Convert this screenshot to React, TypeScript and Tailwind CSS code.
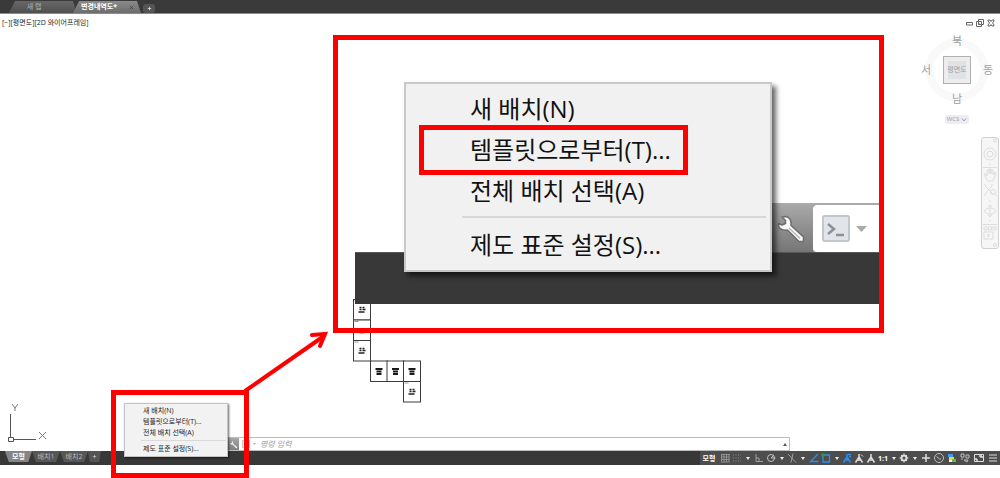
import React from "react";

type MenuItem = { label: string; separated?: boolean };

const MENU: MenuItem[] = [
  { label: "새 배치(N)" },
  { label: "템플릿으로부터(T)..." },
  { label: "전체 배치 선택(A)" },
  { label: "제도 표준 설정(S)...", separated: true },
];

function Wrench({ className }: { className: string }) {
  return (
    <svg viewBox="0 0 28 28" className={className} aria-hidden="true">
      <path
        d="M5 2 L9 1.500 Q14 3 14 8 L14 10.500 L26.500 22 L26.500 26.500 L22 26.500 L10.500 15 Q4 16 1.500 11 L1.500 8.500 L5 10 L8.500 8.500 L8.500 5.500 Z"
        fill="#fafafa"
        stroke="#6d6d6d"
        strokeWidth="1.500"
        strokeLinejoin="round"
      />
      <path d="M12 13 L23 23.500" stroke="#b4b4b4" strokeWidth="1.200" />
    </svg>
  );
}

function TitleTabs() {
  return (
    <header className="flex h-[14px] shrink-0 items-end border-b border-[#8c8c8c] bg-[#3a3a3a] pl-[9px] text-[7px] leading-[12px]">
      <button className="h-[12px] w-[68px] bg-linear-to-b from-[#686868] to-[#505050] pr-[18px] text-center text-[#b4b4b4] [clip-path:polygon(9%_0,94%_0,100%_100%,0_100%)]">
        새 탭
      </button>
      <div className="-ml-[4px] flex h-[12px] w-[68px] items-center justify-between bg-linear-to-b from-[#8a8a8a] to-[#6d6d6d] pr-[7px] pl-[8px] text-white [clip-path:polygon(9%_0,94%_0,100%_100%,0_100%)]">
        <button className="font-bold whitespace-nowrap">변경내역도*</button>
        <button aria-label="탭 닫기" className="text-[#444444]">
          <svg viewBox="0 0 6 6" className="size-[5px]">
            <path d="M1 1 L5 5 M5 1 L1 5" stroke="currentColor" />
          </svg>
        </button>
      </div>
      <button
        aria-label="새 도면"
        className="ml-[2px] flex h-[9px] w-[12px] items-center justify-center rounded-[3px] bg-[#555555] text-[#dddddd]"
      >
        <svg viewBox="0 0 6 6" className="size-[5px]">
          <path d="M3 1 V5 M1 3 H5" stroke="currentColor" />
        </svg>
      </button>
    </header>
  );
}

function WindowButtons() {
  return (
    <div className="absolute top-[5px] right-[5px] flex gap-[3px] text-[#666666]">
      <button aria-label="최소화">
        <svg viewBox="0 0 8 8" className="size-[8px]" fill="none" stroke="currentColor">
          <path d="M1.500 3.500 H7.500 V6 H1.500 Z" />
        </svg>
      </button>
      <button aria-label="이전 크기로">
        <svg viewBox="0 0 8 8" className="size-[8px]" fill="none" stroke="currentColor">
          <path d="M2.500 .5 H7.500 V5.500 H2.500 Z M.5 2.500 H5.500 V7.500 H.5 Z M2 5 H4" />
        </svg>
      </button>
      <button aria-label="닫기">
        <svg viewBox="0 0 8 8" className="size-[8px]" fill="none" stroke="currentColor">
          <path d="M1 1 H3 L4 2.500 L5 1 H7 V2 L5.500 4 L7 6 V7 H5 L4 5.500 L3 7 H1 V6 L2.500 4 L1 2 Z" />
        </svg>
      </button>
    </div>
  );
}

function ViewCube() {
  return (
    <div className="absolute top-[20px] right-[7px] flex w-[72px] flex-col items-center text-[#a0a0a0]">
      <svg viewBox="0 0 64 64" className="absolute top-[4px] left-[4px] size-[64px]" aria-hidden="true">
        <circle cx="32" cy="32" r="27.500" fill="none" stroke="#f9f9f9" strokeWidth="8" />
      </svg>
      <div className="relative flex w-full flex-col items-center text-[11px] leading-[14px]">
        <button>북</button>
        <div className="flex h-[44px] w-full items-center justify-between">
          <button>서</button>
          <button className="flex size-[28px] items-center justify-center border border-[#b0b0b0] bg-[#ededed] text-[7px]">
            <span className="flex h-[18px] w-[18px] items-center justify-center bg-[#e0e2e8] whitespace-nowrap">
              평면도
            </span>
          </button>
          <button>동</button>
        </div>
        <button>남</button>
      </div>
      <button className="mt-[9px] flex h-[9px] w-[24px] items-center justify-center gap-[2px] rounded-[2px] bg-[#ececf5] text-[6px] leading-[9px]">
        WCS
        <svg viewBox="0 0 6 4" className="h-[4px] w-[6px]" fill="none" stroke="currentColor">
          <path d="M1 .5 L3 3 L5 .5" />
        </svg>
      </button>
    </div>
  );
}

function NavigationBar() {
  return (
    <nav
      aria-label="탐색 막대"
      className="absolute top-[123px] right-px rounded-[3px] border border-[#d0d0d0] bg-[#f6f6f6]"
    >
      <svg viewBox="0 0 16 110" className="h-[110px] w-[16px]" fill="none" stroke="#dddddd">
        <circle cx="13" cy="2.500" r="1.500" />
        <circle cx="8" cy="16" r="6" />
        <circle cx="8" cy="16" r="3" />
        <path d="M7 26 H9 M1 29.500 H15" />
        <path d="M4 40 L2 36 L4 36 L5 38 V32 H7 V36 V31 H9 V36 V32 H11 V37 L13 34 L14 35 L11 43 H6 Z" />
        <path d="M3 48 L11 56 M10 48 L3 56 M2 47 H4 M9 47 H11 M2 57 H4" />
        <circle cx="11" cy="54" r="2.500" />
        <path d="M12.500 56 L15 58 M7 63 H9" />
        <path d="M8 67 V79 M6 69 L8 67 L10 69 M6 77 L8 79 L10 77 M2 73 C5 69 12 69 14 73 C12 77 5 77 2 73 M7 83 H9" />
        <path d="M1 86.500 H15 M2 89 H5 V92 H2 Z M6.500 89 H9.500 V92 H6.500 Z M11 89 H14 V92 H11 Z M2 94 H11 V101 H2 Z M6 96 L8 97.500 L6 99 Z" />
        <circle cx="13" cy="107" r="1.500" />
      </svg>
    </nav>
  );
}

const SHEETS = [
  { x: 0.5, y: 0.5, mark: 0 },
  { x: 0.5, y: 21, mark: 1 },
  { x: 0.5, y: 41.5, mark: 0 },
  { x: 17.5, y: 62, mark: 2 },
  { x: 34, y: 62, mark: 2 },
  { x: 50.5, y: 62, mark: 2 },
  { x: 50.5, y: 82.5, mark: 0 },
];

function SheetDrawing() {
  return (
    <svg viewBox="0 0 70 104" className="absolute top-[285px] left-[353px] h-[104px] w-[70px]" aria-hidden="true">
      {SHEETS.map((s, i) => (
        <g key={i}>
          <rect x={s.x} y={s.y} width="17" height="20.500" fill="#ffffff" stroke="#3c3c3c" />
          {s.mark === 2 ? (
            <path
              d={`M${s.x + 5} ${s.y + 8} h7 M${s.x + 6} ${s.y + 10.5} h5 M${s.x + 6} ${s.y + 13} h5`}
              stroke="#1a1a1a"
              strokeWidth="2"
            />
          ) : s.mark === 1 ? (
            <path d={`M${s.x + 6} ${s.y + 8.5} h5 M${s.x + 6} ${s.y + 13} h5`} stroke="#999999" />
          ) : (
            <path
              d={`M${s.x + 6} ${s.y + 8} h2 m1 0 h2 M${s.x + 6} ${s.y + 10} h2 m1 0 h3 M${s.x + 5} ${s.y + 12.5} h6`}
              stroke="#222222"
              strokeWidth="1.500"
            />
          )}
          {s.mark !== 2 && <path d={`M${s.x + 1} ${s.y + 1.5} h4`} stroke="#999999" />}
        </g>
      ))}
    </svg>
  );
}

function EnlargedView() {
  return (
    <section
      aria-label="확대 보기"
      className="absolute top-[21px] left-[333px] h-[298px] w-[551px] border-[5px] border-[#ff0000] pl-[17px]"
    >
      <div className="flex h-[264px] flex-col justify-end bg-white">
        <div className="flex h-[49px] justify-end">
          <div className="flex w-[110px] border-t-2 border-[#aaaaaa] bg-[#909090]">
            <button
              aria-label="사용자화"
              className="flex w-[44px] items-center justify-center bg-linear-to-b from-[#a8a8a8] to-[#767676]"
            >
              <Wrench className="size-[28px]" />
            </button>
            <button
              aria-label="최근 명령"
              className="flex flex-1 items-center gap-[6px] rounded-l-[4px] bg-white pl-[9px]"
            >
              <svg viewBox="0 0 28 27" className="h-[27px] w-[28px]" fill="none">
                <rect x="1" y="1" width="26" height="25" rx="1.500" fill="#e1e5e9" stroke="#c0c7cd" strokeWidth="2" />
                <path d="M6 9 L12 14 L6 19" stroke="#8a9299" strokeWidth="2.500" />
                <path d="M14 20 H22" stroke="#8a9299" strokeWidth="2.500" />
              </svg>
              <svg viewBox="0 0 11 6" className="h-[6px] w-[11px]">
                <path d="M0 0 H11 L5.500 6 Z" fill="#aaaaaa" />
              </svg>
            </button>
          </div>
        </div>
        <div className="h-[52px] border-t border-[#555555] bg-[#383838]" />
      </div>
      <div
        role="menu"
        className="absolute top-[42px] left-[66px] w-[368px] border-2 border-[#c9c9c9] bg-[#f1f1f1] pt-[4px] pb-[5px] pl-[56px] text-[24px] leading-[41px] text-[#111111] shadow-[4px_4px_5px_rgba(0,0,0,0.6)]"
      >
        {MENU.map((item) => (
          <React.Fragment key={item.label}>
            {item.separated && <hr className="mt-[5px] mr-[4px] mb-[6px] border-t-2 border-[#d7d7d7]" />}
            <button role="menuitem" className="block h-[41px] w-full pl-[8px] text-left whitespace-nowrap">
              {item.label}
            </button>
          </React.Fragment>
        ))}
      </div>
      <div className="absolute top-[85px] left-[81px] h-[50px] w-[269px] border-[5px] border-[#ff0000]" />
    </section>
  );
}

function LayoutMenu() {
  return (
    <div className="absolute -bottom-[27px] left-[111px] z-10 h-[88px] w-[138px] border-[5px] border-[#ff0000]">
      <div
        role="menu"
        className="absolute top-[8px] left-[8px] w-[104px] border border-[#c4c4c4] bg-[#f2f2f2] pt-px pb-[2px] pl-[16px] text-[7px] leading-[11px] text-[#222222] shadow-[1px_1px_2px_rgba(0,0,0,0.6)]"
      >
        {MENU.map((item) => (
          <React.Fragment key={item.label}>
            {item.separated && <hr className="mt-[2px] mr-px mb-[2px] border-[#dadada]" />}
            <button role="menuitem" className="block h-[11px] w-full pl-[2px] text-left whitespace-nowrap">
              {item.label}
            </button>
          </React.Fragment>
        ))}
      </div>
    </div>
  );
}

function CommandLine() {
  return (
    <div className="mr-[210px] ml-[227px] flex h-[14px] border border-[#bcbcbc] bg-white">
      <button
        aria-label="사용자화"
        className="flex w-[11px] shrink-0 items-center justify-center bg-linear-to-b from-[#a8a8a8] to-[#808080]"
      >
        <Wrench className="size-[9px] shrink-0" />
      </button>
      <button aria-label="최근 명령" className="ml-[3px] flex items-center gap-[3px]">
        <svg viewBox="0 0 8 8" className="size-[8px]" fill="none">
          <rect x=".5" y=".5" width="7" height="7" fill="#e6e9ec" stroke="#c6cbd0" />
          <path d="M2 2.500 L4 4 L2 5.500 M4 6 H6" stroke="#8a929a" />
        </svg>
        <svg viewBox="0 0 4 2" className="h-[2px] w-[3px]">
          <path d="M0 0 H4 L2 2 Z" fill="#999999" />
        </svg>
      </button>
      <input
        aria-label="명령 입력"
        placeholder="명령 입력"
        className="ml-[4px] min-w-0 flex-1 text-[8px] leading-[12px] italic outline-none placeholder:text-[#a0a0a0]"
      />
      <button aria-label="명령 기록" className="pr-[2px]">
        <svg viewBox="0 0 4 3" className="h-[3px] w-[4px]">
          <path d="M0 3 H4 L2 0 Z" fill="#555555" />
        </svg>
      </button>
    </div>
  );
}

type Tool = { label: string; width: string; tone?: string; art: React.ReactNode };

const caret = <path d="M4 5 H8 L6 8 Z" fill="#eeeeee" stroke="none" />;
const person = <path d="M6 2 V5 M6 5 L2.500 10.500 M6 5 L9.500 10.500 M4 8 H8" strokeWidth="1.500" />;

const TOOLS: Tool[] = [
  { label: "그리드", width: "w-[13px]", tone: "text-[#a0a0a0]", art: <path d="M2.500 2 V10 M5 2 V10 M7.500 2 V10 M10 2 V10 M2 2.500 H10.500 M2 5 H10.500 M2 7.500 H10.500 M2 10 H10.500" strokeWidth=".8" /> },
  { label: "스냅", width: "w-[12px]", tone: "text-[#8a8a8a]", art: <path d="M2 3 H10 M2 6 H10 M2 9 H10" strokeDasharray="1 1.500" /> },
  { label: "스냅 설정", width: "w-[9px]", art: caret },
  { label: "직교", width: "w-[13px]", tone: "text-[#a0a0a0]", art: <path d="M3 2 V9.500 H10 M3 6 H6 V9" /> },
  { label: "극좌표 추적", width: "w-[12px]", tone: "text-[#c0c0c0]", art: <><circle cx="6" cy="6" r="3.500" /><path d="M6 6 H10.500 M6 6 L9 3" /></> },
  { label: "추적 설정", width: "w-[9px]", art: caret },
  { label: "등각투영", width: "w-[12px]", tone: "text-[#a0a0a0]", art: <path d="M2 2 L10 10.500 M7 1.500 L5 10.500" /> },
  { label: "등각투영 설정", width: "w-[9px]", art: caret },
  { label: "스냅 추적", width: "w-[13px]", tone: "text-[#2f8df0]", art: <path d="M10 2 L2.500 9.500 H10.500" strokeWidth="1.300" /> },
  { label: "객체 스냅", width: "w-[12px]", tone: "text-[#2f8df0]", art: <><path d="M3 3 H9.500 V10 H3 Z" strokeWidth="1.300" /><circle cx="3" cy="3" r="1.800" fill="#23a03b" stroke="none" /></> },
  { label: "객체 스냅 설정", width: "w-[9px]", art: caret },
  { label: "주석 표시", width: "w-[12px]", tone: "text-[#2f8df0]", art: <>{person}<path d="M7 2.500 H10 M8 4.500 H10" strokeWidth="1.500" /></> },
  { label: "자동 축척", width: "w-[12px]", art: <>{person}<path d="M8 2.500 L10 4.500" /></> },
  { label: "축척", width: "w-[12px]", art: person },
];

const MORE_TOOLS: Tool[] = [
  { label: "축척 선택", width: "w-[9px]", art: caret },
  { label: "작업공간", width: "w-[12px]", art: <><circle cx="6" cy="6" r="2.500" strokeWidth="2" /><path d="M6 1.500 V3 M6 9 V10.500 M1.500 6 H3 M9 6 H10.500 M3 3 L4 4 M9 3 L8 4 M3 9 L4 8 M9 9 L8 8" /></> },
  { label: "작업공간 선택", width: "w-[9px]", art: caret },
  { label: "주석 모니터", width: "w-[13px]", art: <path d="M6 2 V10 M2 6 H10" strokeWidth="1.500" /> },
  { label: "하드웨어 가속", width: "w-[14px]", tone: "text-[#bdbdbd]", art: <><circle cx="6" cy="6" r="4.500" /><path d="M3.500 4.500 L6.500 7 H8" /></> },
  { label: "그래픽 성능", width: "w-[12px]", art: <g stroke="none"><rect x="2" y="2" width="5" height="3" fill="#3d9df2" /><rect x="3" y="5" width="5" height="3" fill="#f5d33b" /><rect x="6" y="7" width="4" height="3" fill="#5fc050" /><rect x="3" y="8" width="3" height="2" fill="#eeeeee" /></g> },
  { label: "객체 분리", width: "w-[13px]", tone: "text-[#bdbdbd]", art: <path d="M2 2 H5 V5 H2 Z M7 3 H10 V6 H7 Z M3 6 V8 M5 8 L8 10 L9 8 Z" /> },
  { label: "전체 화면", width: "w-[16px]", art: <><path d="M1.500 2.500 H10.500 V9.500 H1.500 Z" /><path d="M3 8 V6 M3 8 H5 M9 4 H6 M9 4 V6 M7 5 H8" strokeWidth="1.500" /></> },
  { label: "사용자화", width: "w-[12px]", art: <path d="M2 3 H10 M2 6 H10 M2 9 H10" strokeWidth="1.200" /> },
];

function ToolButtons({ tools }: { tools: Tool[] }) {
  return tools.map((t) => (
    <button
      key={t.label}
      aria-label={t.label}
      className={`flex h-full items-center justify-center overflow-hidden ${t.width} ${t.tone ?? "text-[#dddddd]"}`}
    >
      <svg viewBox="0 0 12 12" className="size-[12px] shrink-0" fill="none" stroke="currentColor">
        {t.art}
      </svg>
    </button>
  ));
}

function StatusBar() {
  return (
    <footer className="flex h-[14px] shrink-0 items-start justify-between bg-[#383838] text-[7px] leading-[11px] text-[#b8b8b8]">
      <div className="flex pl-[5px]">
        <button className="h-[11px] w-[27px] bg-[#858585] font-bold text-white [clip-path:polygon(0_0,100%_0,86%_100%,14%_100%)]">
          모형
        </button>
        <button className="h-[11px] w-[28px] bg-[#575757] [clip-path:polygon(0_0,100%_0,86%_100%,14%_100%)]">배치1</button>
        <button className="h-[11px] w-[28px] bg-[#575757] [clip-path:polygon(0_0,100%_0,86%_100%,14%_100%)]">배치2</button>
        <button
          aria-label="새 배치"
          className="flex h-[11px] w-[13px] items-center justify-center bg-[#555555] [clip-path:polygon(0_0,100%_0,86%_100%,14%_100%)]"
        >
          <svg viewBox="0 0 6 6" className="size-[5px]">
            <path d="M3 1 V5 M1 3 H5" stroke="currentColor" />
          </svg>
        </button>
      </div>
      <div className="flex h-full items-center bg-[#4d4d4d] pr-px">
        <button className="w-[18px] text-[7px] font-bold whitespace-nowrap text-white">모형</button>
        <ToolButtons tools={TOOLS} />
        <button className="w-[12px] text-[7px] font-bold text-white">1:1</button>
        <ToolButtons tools={MORE_TOOLS} />
      </div>
    </footer>
  );
}

export default function App() {
  return (
    <div className="flex h-screen flex-col overflow-hidden bg-white pb-[13px] font-['Open_Sans','Noto_Sans_CJK_KR',sans-serif]">
      <TitleTabs />
      <main className="relative flex flex-1 flex-col justify-between">
        <p className="pt-[3px] pl-[2px] text-[7px] leading-[11px] text-[#222222]">[−][평면도][2D 와이어프레임]</p>
        <WindowButtons />
        <ViewCube />
        <NavigationBar />
        <SheetDrawing />
        <CommandLine />
        <svg viewBox="0 0 42 42" className="absolute bottom-[6px] left-[7px] size-[42px]" fill="none" stroke="#555555">
          <path d="M3.500 11 V34 M6 36.500 H29 M1.500 34.500 H6.500 V38.500 H1.500 Z" />
          <path d="M5 1 L8 5 L11 1 M8 5 V8 M32 29 L39 36 M39 29 L32 36" stroke="#777777" />
        </svg>
        <EnlargedView />
        <LayoutMenu />
        <svg viewBox="0 0 90 66" className="absolute top-[317px] left-[243px] h-[66px] w-[90px]" fill="none" stroke="#ff0000" aria-hidden="true">
          <path d="M2 60 L81 5" strokeWidth="4" />
          <path d="M69 4 L82 3 L77 15" strokeWidth="4" strokeLinecap="round" />
        </svg>
      </main>
      <StatusBar />
    </div>
  );
}
